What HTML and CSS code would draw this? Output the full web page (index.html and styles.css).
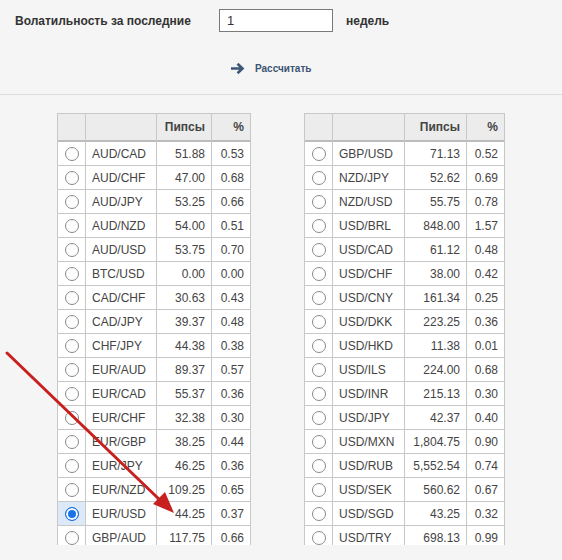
FILE: index.html
```html
<!DOCTYPE html>
<html>
<head>
<meta charset="utf-8">
<link rel="stylesheet" href="styles.css">
</head>
<body>
<div class="page">
  <div class="form-row">
    <span class="label">Волатильность за последние</span>
    <input class="weeks" type="text" value="1">
    <span class="unit">недель</span>
  </div>
  <div class="btn-row">
    <a class="calc">
      <svg width="15" height="13" viewBox="0 0 15 13"><path d="M1 6.5H12M7.5 1.8L12.5 6.5L7.5 11.2" fill="none" stroke="#3d5877" stroke-width="2.6" stroke-linecap="butt" stroke-linejoin="miter"/></svg>
      <span>Рассчитать</span>
    </a>
  </div>
  <div class="divider"></div>
  <div class="tables">
    <div class="scroll">
      <table class="grid left">
        <thead><tr><th class="c-r"></th><th class="c-p"></th><th class="c-n">Пипсы</th><th class="c-q">%</th></tr></thead>
        <tbody>
          <tr><td class="r"><span class="radio"></span></td><td>AUD/CAD</td><td class="n">51.88</td><td class="n">0.53</td></tr>
          <tr><td class="r"><span class="radio"></span></td><td>AUD/CHF</td><td class="n">47.00</td><td class="n">0.68</td></tr>
          <tr><td class="r"><span class="radio"></span></td><td>AUD/JPY</td><td class="n">53.25</td><td class="n">0.66</td></tr>
          <tr><td class="r"><span class="radio"></span></td><td>AUD/NZD</td><td class="n">54.00</td><td class="n">0.51</td></tr>
          <tr><td class="r"><span class="radio"></span></td><td>AUD/USD</td><td class="n">53.75</td><td class="n">0.70</td></tr>
          <tr><td class="r"><span class="radio"></span></td><td>BTC/USD</td><td class="n">0.00</td><td class="n">0.00</td></tr>
          <tr><td class="r"><span class="radio"></span></td><td>CAD/CHF</td><td class="n">30.63</td><td class="n">0.43</td></tr>
          <tr><td class="r"><span class="radio"></span></td><td>CAD/JPY</td><td class="n">39.37</td><td class="n">0.48</td></tr>
          <tr><td class="r"><span class="radio"></span></td><td>CHF/JPY</td><td class="n">44.38</td><td class="n">0.38</td></tr>
          <tr><td class="r"><span class="radio"></span></td><td>EUR/AUD</td><td class="n">89.37</td><td class="n">0.57</td></tr>
          <tr><td class="r"><span class="radio"></span></td><td>EUR/CAD</td><td class="n">55.37</td><td class="n">0.36</td></tr>
          <tr><td class="r"><span class="radio"></span></td><td>EUR/CHF</td><td class="n">32.38</td><td class="n">0.30</td></tr>
          <tr><td class="r"><span class="radio"></span></td><td>EUR/GBP</td><td class="n">38.25</td><td class="n">0.44</td></tr>
          <tr><td class="r"><span class="radio"></span></td><td>EUR/JPY</td><td class="n">46.25</td><td class="n">0.36</td></tr>
          <tr><td class="r"><span class="radio"></span></td><td>EUR/NZD</td><td class="n">109.25</td><td class="n">0.65</td></tr>
          <tr><td class="r sel"><span class="radio on"></span></td><td>EUR/USD</td><td class="n">44.25</td><td class="n">0.37</td></tr>
          <tr><td class="r"><span class="radio"></span></td><td>GBP/AUD</td><td class="n">117.75</td><td class="n">0.66</td></tr>
        </tbody>
      </table>
    </div>
    <div class="scroll">
      <table class="grid right">
        <thead><tr><th class="c-r"></th><th class="c-p"></th><th class="c-n">Пипсы</th><th class="c-q">%</th></tr></thead>
        <tbody>
          <tr><td class="r"><span class="radio"></span></td><td>GBP/USD</td><td class="n">71.13</td><td class="n">0.52</td></tr>
          <tr><td class="r"><span class="radio"></span></td><td>NZD/JPY</td><td class="n">52.62</td><td class="n">0.69</td></tr>
          <tr><td class="r"><span class="radio"></span></td><td>NZD/USD</td><td class="n">55.75</td><td class="n">0.78</td></tr>
          <tr><td class="r"><span class="radio"></span></td><td>USD/BRL</td><td class="n">848.00</td><td class="n">1.57</td></tr>
          <tr><td class="r"><span class="radio"></span></td><td>USD/CAD</td><td class="n">61.12</td><td class="n">0.48</td></tr>
          <tr><td class="r"><span class="radio"></span></td><td>USD/CHF</td><td class="n">38.00</td><td class="n">0.42</td></tr>
          <tr><td class="r"><span class="radio"></span></td><td>USD/CNY</td><td class="n">161.34</td><td class="n">0.25</td></tr>
          <tr><td class="r"><span class="radio"></span></td><td>USD/DKK</td><td class="n">223.25</td><td class="n">0.36</td></tr>
          <tr><td class="r"><span class="radio"></span></td><td>USD/HKD</td><td class="n">11.38</td><td class="n">0.01</td></tr>
          <tr><td class="r"><span class="radio"></span></td><td>USD/ILS</td><td class="n">224.00</td><td class="n">0.68</td></tr>
          <tr><td class="r"><span class="radio"></span></td><td>USD/INR</td><td class="n">215.13</td><td class="n">0.30</td></tr>
          <tr><td class="r"><span class="radio"></span></td><td>USD/JPY</td><td class="n">42.37</td><td class="n">0.40</td></tr>
          <tr><td class="r"><span class="radio"></span></td><td>USD/MXN</td><td class="n">1,804.75</td><td class="n">0.90</td></tr>
          <tr><td class="r"><span class="radio"></span></td><td>USD/RUB</td><td class="n">5,552.54</td><td class="n">0.74</td></tr>
          <tr><td class="r"><span class="radio"></span></td><td>USD/SEK</td><td class="n">560.62</td><td class="n">0.67</td></tr>
          <tr><td class="r"><span class="radio"></span></td><td>USD/SGD</td><td class="n">43.25</td><td class="n">0.32</td></tr>
          <tr><td class="r"><span class="radio"></span></td><td>USD/TRY</td><td class="n">698.13</td><td class="n">0.99</td></tr>
        </tbody>
      </table>
    </div>
  </div>
  <svg class="annot" width="562" height="560" viewBox="0 0 562 560">
    <line x1="7" y1="353" x2="162" y2="502" stroke="#c8201e" stroke-width="3" stroke-linecap="round"/>
    <path d="M174 513 L153 504 L165 492 Z" fill="#c8201e"/>
  </svg>
</div>
</body>
</html>
```
FILE: styles.css
```css
html, body {
  margin: 0;
  padding: 0;
  background: #f5f5f5;
}
body {
  font-family: "Liberation Sans", Arial, sans-serif;
  color: #333;
  width: 562px;
  height: 560px;
  overflow: hidden;
}
.page {
  position: relative;
  height: 560px;
}
.form-row {
  display: flex;
  align-items: center;
  padding: 9px 0 0 15px;
  height: 23px;
}
.label {
  width: 204px;
  font-size: 12px;
  font-weight: bold;
  color: #333;
}
.weeks {
  box-sizing: border-box;
  width: 114px;
  height: 23px;
  margin: 0;
  border: 1px solid #7a7a7a;
  background: #fff;
  padding: 0 7px;
  font-family: "Liberation Sans", Arial, sans-serif;
  font-size: 13px;
  color: #333;
  outline: none;
}
.unit {
  margin-left: 13px;
  font-size: 12px;
  font-weight: bold;
  color: #333;
}
.btn-row {
  display: flex;
  padding: 29px 0 0 230px;
  height: 14px;
}
.calc {
  display: flex;
  align-items: center;
  gap: 10px;
  font-size: 10px;
  font-weight: bold;
  color: #3a5473;
}
.calc svg {
  display: block;
}
.divider {
  margin-top: 19px;
  height: 1px;
  background: #dcdcdc;
}
.tables {
  display: flex;
  gap: 53px;
  padding: 18px 0 0 57px;
}
.scroll {
  height: 432px;
  overflow: hidden;
}
.grid {
  border-collapse: separate;
  border-spacing: 0;
  table-layout: fixed;
  border-top: 1px solid #c8c8c8;
  border-left: 1px solid #c8c8c8;
  font-size: 12px;
  color: #444;
}
.grid th, .grid td {
  border-right: 1px solid #c8c8c8;
  border-bottom: 1px solid #c8c8c8;
  padding: 0 6px;
  white-space: nowrap;
  box-sizing: border-box;
}
.grid th {
  height: 28px;
  background: #ececec;
  font-weight: bold;
  text-align: right;
  color: #444;
  border-bottom: 2px solid #bcbcbc;
}
.grid td {
  height: 24px;
  background: #fff;
}
.grid td.n {
  text-align: right;
}
.left .c-r { width: 28px; }
.left .c-p { width: 71px; }
.left .c-n { width: 55px; }
.left .c-q { width: 39px; }
.right .c-r { width: 28px; }
.right .c-p { width: 72px; }
.right .c-n { width: 62px; }
.right .c-q { width: 38px; }
.grid td.r {
  padding: 0;
  text-align: center;
}
.grid td.sel {
  background: #dbe9f8;
}
.radio {
  display: inline-block;
  box-sizing: border-box;
  width: 14px;
  height: 14px;
  border: 1px solid #8a8a8a;
  border-radius: 50%;
  background: #fff;
  vertical-align: middle;
}
.radio.on {
  border: 1px solid #1a6fd6;
  background: #1a73e8;
  box-shadow: inset 0 0 0 2px #fff;
}
.annot {
  position: absolute;
  left: 0;
  top: 0;
  pointer-events: none;
}
```
